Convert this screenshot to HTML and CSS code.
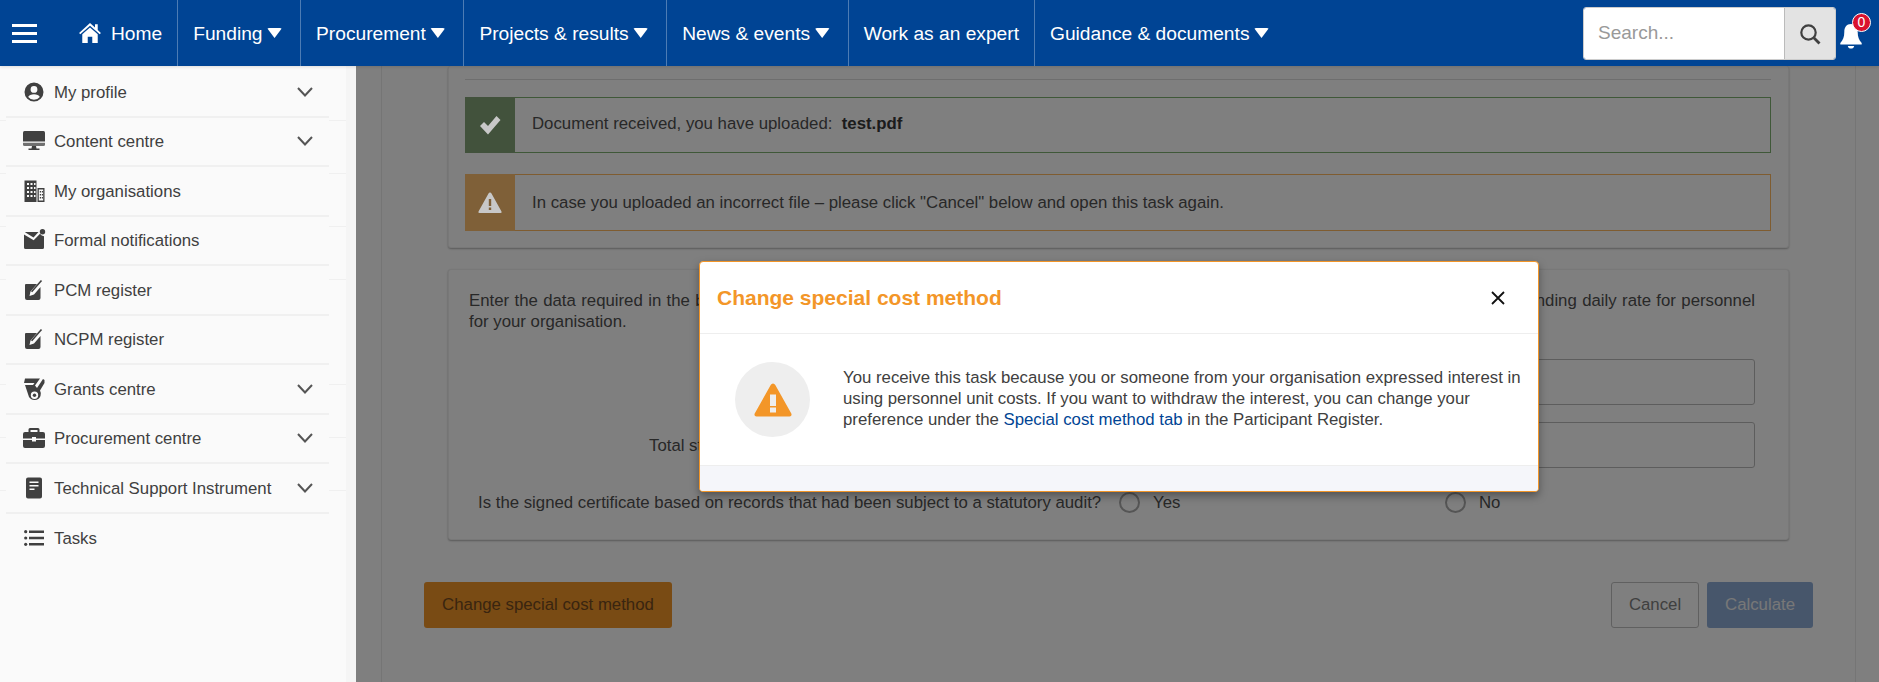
FILE: index.html
```html
<!DOCTYPE html>
<html lang="en">
<head>
    <meta charset="UTF-8">
    <title>Change special cost method</title>
    <link rel="stylesheet" href="styles.css">
</head>
<body>
    <!-- Top navigation -->
    <header class="topbar">
        <div class="burger"><span></span><span></span><span></span></div>
        <a class="nav-item nav-home">
            <svg class="home-icon" viewBox="0 0 24 22"><path d="M12 0 L17.5 5 V1.5 H20.5 V7.8 L24 11 L22.7 12.5 L12 3 L1.3 12.5 L0 11 Z M12 5 L20.5 12.5 V22 H14.5 V15 H9.5 V22 H3.5 V12.5 Z"/></svg>
            Home
        </a>
        <a class="nav-item">Funding <i class="caret"></i></a>
        <a class="nav-item">Procurement <i class="caret"></i></a>
        <a class="nav-item">Projects &amp; results <i class="caret"></i></a>
        <a class="nav-item">News &amp; events <i class="caret"></i></a>
        <a class="nav-item nav-plain">Work as an expert</a>
        <a class="nav-item nav-last">Guidance &amp; documents <i class="caret"></i></a>

        <div class="search">
            <input class="search-input" type="text" placeholder="Search...">
            <div class="search-btn">
                <svg viewBox="0 0 22 22" width="22" height="22"><circle cx="9.5" cy="9.5" r="7.2" fill="none" stroke="#404040" stroke-width="2.2"/><path d="M14.8 14.8 L20.5 20.5" stroke="#404040" stroke-width="2.8"/></svg>
            </div>
        </div>
        <div class="bell">
            <svg viewBox="0 0 22 26" width="22" height="26"><path d="M11 1 C15.5 1 17.7 4.5 17.7 9 C17.7 14 19 17 21.7 20 V21.5 H0.3 V20 C3 17 4.3 14 4.3 9 C4.3 4.5 6.5 1 11 1 Z M7.8 23 H14.2 C13.8 24.8 12.6 25.6 11 25.6 C9.4 25.6 8.2 24.8 7.8 23 Z" fill="#fff"/></svg>
            <span class="badge">0</span>
        </div>
    </header>

    <div class="layout">
        <!-- Side menu -->
        <aside class="sidebar">
            <ul class="side-list">
                <li class="side-item">
                    <svg class="side-icon" viewBox="0 0 24 24"><path fill-rule="evenodd" d="M12 2.5 a9.5 9.5 0 1 0 0 19 a9.5 9.5 0 1 0 0 -19 Z M12 6 a3.4 3.4 0 1 1 0 6.8 a3.4 3.4 0 1 1 0 -6.8 Z M12 14.3 c2.8 0 5 1 5.8 2.7 a7.4 7.4 0 0 1 -11.6 0 c0.8 -1.7 3 -2.7 5.8 -2.7 Z"/></svg>
                    <span class="side-text">My profile</span>
                    <svg class="chevron" viewBox="0 0 16 10"><path d="M1 1 L8 8.5 L15 1"/></svg>
                </li>
                <li class="side-item">
                    <svg class="side-icon" viewBox="0 0 24 24"><path d="M2.5 2 H21.5 Q23 2 23 3.5 V12.5 H1 V3.5 Q1 2 2.5 2 Z"/><path opacity=".75" d="M1 13.7 H23 V15.5 Q23 17 21.5 17 H2.5 Q1 17 1 15.5 Z"/><path d="M10 17 H14 L14.5 19.5 H17.5 V21 H6.5 V19.5 H9.5 Z"/></svg>
                    <span class="side-text">Content centre</span>
                    <svg class="chevron" viewBox="0 0 16 10"><path d="M1 1 L8 8.5 L15 1"/></svg>
                </li>
                <li class="side-item">
                    <svg class="side-icon" viewBox="0 0 24 24"><path fill-rule="evenodd" d="M2.5 1.5 H14.5 V23 H2.5 Z M5 4 V6 H7 V4 Z M8.5 4 V6 H10.5 V4 Z M12 4 V6 H13.5 V4 Z M5 8 V10 H7 V8 Z M8.5 8 V10 H10.5 V8 Z M12 8 V10 H13.5 V8 Z M5 12 V14 H7 V12 Z M8.5 12 V14 H10.5 V12 Z M12 12 V14 H13.5 V12 Z M5 16 V18 H7 V16 Z M8.5 16 V18 H10.5 V16 Z M12 16 V18 H13.5 V16 Z"/><path fill-rule="evenodd" d="M15.5 9 H22.5 V23 H15.5 Z M16.8 10.5 V21.5 H21.2 V10.5 Z"/><path d="M17.8 12 H19 V13.5 H17.8 Z M19.8 12 H21 V13.5 H19.8 Z M17.8 15 H19 V16.5 H17.8 Z M19.8 15 H21 V16.5 H19.8 Z M17.8 18 H19 V19.5 H17.8 Z M19.8 18 H21 V19.5 H19.8 Z"/></svg>
                    <span class="side-text">My organisations</span>
                </li>
                <li class="side-item">
                    <svg class="side-icon" viewBox="0 0 24 24"><path d="M3.5 4 H16.5 L11.5 9.5 L3 4.3 Z M2 6.5 L11.7 12.3 L18 5.8 Q19.5 8 22 8.2 V19.5 Q22 21 20.5 21 H3.5 Q2 21 2 19.5 Z"/><circle cx="20.5" cy="3.8" r="2.7"/></svg>
                    <span class="side-text">Formal notifications</span>
                </li>
                <li class="side-item">
                    <svg class="side-icon" viewBox="0 0 24 24"><path d="M4 6 H15 L8.5 13.5 L7.5 18 L12 16.5 L18.5 9 V20 Q18.5 22 16.5 22 H5 Q3 22 3 20 V7 Q3 6 4 6 Z"/><path d="M9.6 13.8 L19.5 2.5" stroke="#404040" stroke-width="1.6" fill="none"/></svg>
                    <span class="side-text">PCM register</span>
                </li>
                <li class="side-item">
                    <svg class="side-icon" viewBox="0 0 24 24"><path d="M4 6 H15 L8.5 13.5 L7.5 18 L12 16.5 L18.5 9 V20 Q18.5 22 16.5 22 H5 Q3 22 3 20 V7 Q3 6 4 6 Z"/><path d="M9.6 13.8 L19.5 2.5" stroke="#404040" stroke-width="1.6" fill="none"/></svg>
                    <span class="side-text">NCPM register</span>
                </li>
                <li class="side-item">
                    <svg class="side-icon" viewBox="0 0 24 24"><path fill-rule="evenodd" d="M3 1.5 H18 L13 8.5 L15 11 L21 2 L22.5 3 V6 L18 13.5 Q19.5 16 18.5 19 Q17 23 12.5 23 Q9 23 7 20 L3 8 H11 L12.5 6 H2 Z M12.5 14.5 a3.7 3.7 0 1 0 0 7.4 a3.7 3.7 0 1 0 0 -7.4 Z"/><circle cx="12.5" cy="18.2" r="1.7"/></svg>
                    <span class="side-text">Grants centre</span>
                    <svg class="chevron" viewBox="0 0 16 10"><path d="M1 1 L8 8.5 L15 1"/></svg>
                </li>
                <li class="side-item">
                    <svg class="side-icon" viewBox="0 0 24 24"><path fill-rule="evenodd" d="M8 2 H16 Q17.5 2 17.5 3.5 V6 H21 Q23 6 23 8 V12.5 H14 V11 H10 V12.5 H1 V8 Q1 6 3 6 H6.5 V3.5 Q6.5 2 8 2 Z M8.5 4 V6 H15.5 V4 Z"/><path d="M1 14 H10 V15.5 H14 V14 H23 V20 Q23 22 21 22 H3 Q1 22 1 20 Z"/></svg>
                    <span class="side-text">Procurement centre</span>
                    <svg class="chevron" viewBox="0 0 16 10"><path d="M1 1 L8 8.5 L15 1"/></svg>
                </li>
                <li class="side-item">
                    <svg class="side-icon" viewBox="0 0 24 24"><path fill-rule="evenodd" d="M6 1.5 H18 Q20 1.5 20 3.5 V20.5 Q20 22.5 18 22.5 H6 Q4 22.5 4 20.5 V3.5 Q4 1.5 6 1.5 Z M7.5 5.5 V7 H16.5 V5.5 Z M7.5 9 V10.5 H16.5 V9 Z M7.5 12.5 V14 H12.5 V12.5 Z"/></svg>
                    <span class="side-text">Technical Support Instrument</span>
                    <svg class="chevron" viewBox="0 0 16 10"><path d="M1 1 L8 8.5 L15 1"/></svg>
                </li>
                <li class="side-item side-item-last">
                    <svg class="side-icon" viewBox="0 0 24 24"><path d="M7 4.5 H22 V7 H7 Z M7 10.8 H22 V13.3 H7 Z M7 17 H22 V19.5 H7 Z"/><circle cx="3.7" cy="5.7" r="1.6"/><circle cx="3.7" cy="12" r="1.6"/><circle cx="3.7" cy="18.3" r="1.6"/></svg>
                    <span class="side-text">Tasks</span>
                </li>
            </ul>
        </aside>

        <main class="main">
            <div class="task">
                <div class="panels">
                    <section class="panel panel-top">
                        <hr class="rule">
                        <div class="alert alert-ok">
                            <div class="alert-icon">
                                <svg viewBox="0 0 24 24" width="24" height="24"><path d="M2 13 L6 9 L10 13 L18.5 3 L22.5 7 L10 21.5 Z"/></svg>
                            </div>
                            <div class="alert-text">Document received, you have uploaded: &nbsp;<b>test.pdf</b></div>
                        </div>
                        <div class="alert alert-warn">
                            <div class="alert-icon">
                                <svg viewBox="0 0 24 24" width="24" height="24"><path fill-rule="evenodd" d="M12 1.5 Q13 1.5 13.5 2.5 L23.5 20.5 Q24 22 22.5 22 H1.5 Q0 22 0.5 20.5 L10.5 2.5 Q11 1.5 12 1.5 Z M10.8 8 V15 H13.2 V8 Z M10.8 16.5 V19 H13.2 V16.5 Z"/></svg>
                            </div>
                            <div class="alert-text">In case you uploaded an incorrect file – please click "Cancel" below and open this task again.</div>
                        </div>
                    </section>

                    <section class="panel panel-form">
                        <p class="intro">Enter the data required in the boxes below, using the figures in the certificate on the usual cost accounting practices, to calculate the corresponding daily rate for personnel for your organisation.</p>
                        <div class="field-row">
                            <label class="field-label"></label>
                            <input class="field-input" type="text">
                        </div>
                        <div class="field-row">
                            <label class="field-label">Total staff costs</label>
                            <input class="field-input" type="text">
                        </div>
                        <div class="radio-row">
                            <span class="radio-question">Is the signed certificate based on records that had been subject to a statutory audit?</span>
                            <span class="radio-option radio-yes"><i class="radio"></i>Yes</span>
                            <span class="radio-option"><i class="radio"></i>No</span>
                        </div>
                    </section>
                </div>

                <div class="actions">
                    <button class="btn btn-orange">Change special cost method</button>
                    <div class="actions-right">
                        <button class="btn btn-cancel">Cancel</button>
                        <button class="btn btn-calc">Calculate</button>
                    </div>
                </div>
            </div>

            <!-- Modal on top of the page -->
            <div class="overlay">
                <div class="modal">
                    <div class="modal-head">
                        <h2 class="modal-title">Change special cost method</h2>
                        <svg class="modal-close" viewBox="0 0 16 16" width="16" height="16"><path d="M2 2 L14 14 M14 2 L2 14"/></svg>
                    </div>
                    <div class="modal-body">
                        <div class="modal-circle">
                            <svg viewBox="0 0 38 34" width="38" height="34"><path fill-rule="evenodd" d="M19 0.5 Q20.5 0.5 21.3 2 L37.3 30.5 Q38.3 33.5 35.5 33.5 H2.5 Q-0.3 33.5 0.7 30.5 L16.7 2 Q17.5 0.5 19 0.5 Z M16 11.5 V23 H22 V11.5 Z M16 24.5 V29.5 H22 V24.5 Z"/></svg>
                        </div>
                        <p class="modal-text">You receive this task because you or someone from your organisation expressed interest in using personnel unit costs. If you want to withdraw the interest, you can change your preference under the <a class="modal-link">Special cost method tab</a> in the Participant Register.</p>
                    </div>
                    <div class="modal-foot"></div>
                </div>
            </div>
        </main>
    </div>
</body>
</html>
```

FILE: styles.css
```css
* {
    box-sizing: border-box;
}
html, body {
    height: 100%;
}
body {
    margin: 0;
    font-family: "Liberation Sans", Arial, sans-serif;
    font-size: 16.8px;
    line-height: 21px;
    color: #505050;
    background: #fff;
    overflow: hidden;
}

/* top bar */
.topbar {
    display: flex;
    align-items: stretch;
    height: 66px;
    background: #004494;
    color: #fff;
    box-shadow: 0 1px 3px rgba(0, 0, 0, 0.12);
    position: relative;
    z-index: 3;
}
.burger {
    width: 64px;
    padding: 24px 0 0 12px;
    display: flex;
    flex-direction: column;
    gap: 5px;
}
.burger span {
    display: block;
    width: 25px;
    height: 3px;
    background: #fff;
}
.nav-item {
    display: flex;
    align-items: center;
    gap: 4.5px;
    padding: 0 18px 0 15px;
    font-size: 19.2px;
    border-right: 1px solid rgba(255, 255, 255, 0.3);
    white-space: nowrap;
}
.nav-home {
    gap: 10px;
    padding: 0 15px;
}
.nav-plain {
    padding-right: 15px;
}
.nav-last {
    border-right: none;
}
.home-icon {
    width: 22px;
    height: 20px;
    fill: #fff;
}
.caret {
    width: 15px;
    height: 10px;
    background: #fff;
    clip-path: polygon(0 0, 100% 0, 50% 100%);
    border-radius: 2px;
}
.search {
    display: flex;
    margin: 7px 4px 6px auto;
    width: 253px;
    border: 1px solid #ccc;
    border-radius: 3px;
    overflow: hidden;
}
.search-input {
    flex: 1;
    min-width: 0;
    border: none;
    padding: 0 14px 2px;
    font-family: inherit;
    font-size: 19px;
}
.search-input::placeholder {
    color: #999;
}
.search-btn {
    width: 51px;
    background: #e3e3e3;
    border-left: 1px solid #bbb;
    display: flex;
    align-items: center;
    justify-content: center;
}
.bell {
    position: relative;
    width: 39px;
    padding-top: 23px;
}
.badge {
    position: absolute;
    top: 13px;
    left: 12px;
    width: 19px;
    height: 19px;
    border: 1px solid #fff;
    border-radius: 50%;
    background: #d9122f;
    color: #fff;
    font-size: 14px;
    line-height: 17px;
    text-align: center;
}

/* page below the bar */
.layout {
    display: flex;
    height: 616px;
}
.sidebar {
    width: 356px;
    flex-shrink: 0;
    padding: 2px 17px 0 6px;
    border-right: 10px solid #f5f5f5;
    background-color: #fafafa;
    background-image: repeating-linear-gradient(to bottom, transparent 0, transparent 51.9px, #f0f0f0 51.9px, #f0f0f0 52.9px);
    background-size: 100% 424px;
    background-position: 0 2px;
    background-repeat: no-repeat;
}
.side-list {
    list-style: none;
    margin: 0;
    padding: 0;
    background: #fafafa;
}
.side-item {
    display: flex;
    align-items: center;
    height: 49.5px;
    padding: 0 16px;
    gap: 8px;
    border-bottom: 2px solid #f0f0f0;
    color: #404040;
}
.side-item-last {
    border-bottom: none;
}
.side-icon {
    width: 24px;
    height: 24px;
    flex-shrink: 0;
    fill: #404040;
}
.side-text {
    flex: 1;
    padding-top: 1px;
}
.chevron {
    width: 16px;
    height: 10px;
    fill: none;
    stroke: #555;
    stroke-width: 2;
}

/* main task */
.main {
    flex: 1;
    position: relative;
    overflow: hidden;
    padding: 0 23px 0 25px;
}
.task {
    height: 100%;
    padding: 0 42px;
    border-left: 1px solid #eaeaea;
    border-right: 1px solid #eaeaea;
}
.panels {
    padding: 0 24px;
}
.panel {
    background: #fff;
    border: 1px solid #f0f0f0;
    border-radius: 3px;
    box-shadow: 0 1px 2px rgba(0, 0, 0, 0.3);
}
.panel-top {
    height: 182px;
    padding: 13px 17px 0 16px;
    border-top: none;
}
.rule {
    margin: 0 0 17px;
    border: none;
    border-top: 1px solid #ddd;
}
.alert {
    display: flex;
    border: 1px solid #7eb070;
    height: 56px;
    margin-bottom: 21px;
}
.alert-warn {
    border-color: #ffb860;
    height: 57px;
    margin-bottom: 0;
}
.alert-icon {
    width: 50px;
    margin: -1px 0 -1px -1px;
    display: flex;
    align-items: center;
    justify-content: center;
}
.alert-icon svg {
    fill: #c8c8c8;
    position: relative;
    z-index: 2;
}
.alert-ok .alert-icon {
    background: #84a478;
}
.alert-warn .alert-icon {
    background: #ffc070;
}
.alert-text {
    padding-left: 17px;
    align-self: center;
}
.alert-ok .alert-text {
    padding-bottom: 3px;
}
.alert-text b {
    color: #383838;
}
.panel-form {
    height: 271px;
    margin-top: 21px;
    padding: 20px 33px 0 20px;
}
.intro {
    margin: 0 0 27px;
    text-align: justify;
}
.field-row {
    display: flex;
    align-items: center;
    margin-bottom: 17px;
}
.field-label {
    width: 500px;
    padding-left: 180px;
}
.field-input {
    flex: 1;
    height: 46px;
    border: 1px solid #bbb;
    border-radius: 3px;
    background: #fff;
}
.radio-row {
    display: flex;
    align-items: center;
    margin: 24px 0 0 9px;
}
.radio-question {
    width: 641px;
}
.radio-option {
    display: flex;
    align-items: center;
    gap: 13px;
}
.radio-yes {
    width: 326px;
}
.radio {
    width: 21px;
    height: 21px;
    border: 2px solid #aaa;
    border-radius: 50%;
}
.actions {
    display: flex;
    justify-content: space-between;
    margin-top: 42px;
}
.actions-right {
    display: flex;
    gap: 8px;
}
.btn {
    height: 46px;
    border-radius: 3px;
    font-family: inherit;
    font-size: 16.8px;
    border: 1px solid transparent;
}
.btn-orange {
    width: 248px;
    background: #f39628;
    color: #744a20;
}
.btn-cancel {
    width: 88px;
    background: #fff;
    border-color: #c0c0c0;
    color: #808080;
}
.btn-calc {
    width: 106px;
    background: #8eacd6;
    color: #f0f0f0;
}

/* modal */
.overlay {
    position: absolute;
    top: 0;
    left: 0;
    right: 0;
    bottom: 0;
    padding: 195px 0 0 3px;
    display: flex;
    justify-content: center;
    align-items: flex-start;
    background: rgba(0, 0, 0, 0.5);
    z-index: 1;
}
.modal {
    width: 840px;
    height: 231px;
    display: flex;
    flex-direction: column;
    background: #fff;
    border: 1px solid #f29527;
    border-radius: 4px;
    box-shadow: 0 4px 8px rgba(0, 0, 0, 0.35);
    overflow: hidden;
    color: #404040;
}
.modal-head {
    display: flex;
    align-items: center;
    justify-content: space-between;
    height: 72px;
    flex-shrink: 0;
    padding: 0 32px 0 17px;
    border-bottom: 1px solid #eee;
}
.modal-title {
    margin: 0;
    font-size: 21px;
    font-weight: bold;
    color: #f39628;
}
.modal-close {
    fill: none;
    stroke: #111;
    stroke-width: 1.8;
}
.modal-body {
    flex: 1;
    display: flex;
    align-items: center;
    padding: 0 15px 0 35px;
    gap: 33px;
}
.modal-circle {
    width: 75px;
    height: 75px;
    flex-shrink: 0;
    border-radius: 50%;
    background: #eee;
    display: flex;
    align-items: center;
    justify-content: center;
}
.modal-circle svg {
    fill: #f39628;
}
.modal-text {
    margin: -2px 0 0;
}
.modal-link {
    color: #004494;
}
.modal-foot {
    height: 26px;
    flex-shrink: 0;
    background: #f5f6fa;
    border-top: 1px solid #eee;
}
```
